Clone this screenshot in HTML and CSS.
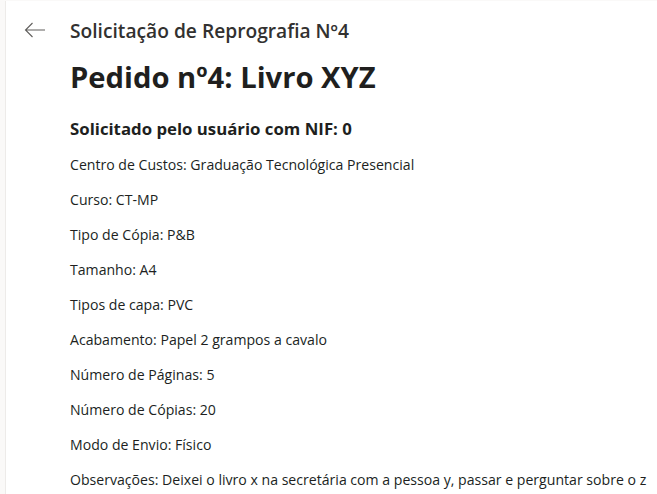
FILE: index.html
```html
<!DOCTYPE html>
<html lang="pt">
<head>
<meta charset="utf-8">
<link rel="stylesheet" href="styles.css">
</head>
<body>
<div class="panel">
  <header class="head">
    <button class="back" aria-label="Voltar">
      <svg width="22" height="16" viewBox="0 0 22 16"><path d="M21 8H1.5M8.5 1L1.5 8l7 7" fill="none" stroke="#605e5c" stroke-width="1.1"/></svg>
    </button>
    <h1 class="head-title">Solicitação de Reprografia Nº4</h1>
  </header>
  <main class="content">
    <h2 class="title">Pedido nº4: Livro XYZ</h2>
    <h3 class="sub">Solicitado pelo usuário com NIF: 0</h3>
    <p class="row">Centro de Custos: Graduação Tecnológica Presencial</p>
    <p class="row">Curso: CT-MP</p>
    <p class="row">Tipo de Cópia: P&amp;B</p>
    <p class="row">Tamanho: A4</p>
    <p class="row">Tipos de capa: PVC</p>
    <p class="row">Acabamento: Papel 2 grampos a cavalo</p>
    <p class="row">Número de Páginas: 5</p>
    <p class="row">Número de Cópias: 20</p>
    <p class="row">Modo de Envio: Físico</p>
    <p class="row nowrap">Observações: Deixei o livro x na secretária com a pessoa y, passar e perguntar sobre o z</p>
  </main>
</div>
</body>
</html>
```

FILE: styles.css
```css
html, body {
  margin: 0;
  padding: 0;
  height: 100%;
  overflow: hidden;
  background: #faf9f8;
  font-family: "Open Sans", "Noto Sans", sans-serif;
  color: #201f1e;
}
.panel {
  margin: 1px 0 0 5px;
  min-height: 100%;
  background: #fff;
  border-left: 1px solid #edebe9;
}
.head {
  display: flex;
  align-items: center;
  height: 58px;
  padding-left: 18px;
}
.back {
  border: 0;
  background: none;
  padding: 0;
  width: 46px;
  height: 32px;
  display: flex;
  align-items: center;
  cursor: pointer;
}
.head-title {
  margin: 0;
  font-size: 19.2px;
  font-weight: 600;
  color: #323130;
}
.content {
  padding-left: 64px;
}
.title {
  margin: -2px 0 0;
  font-size: 29.2px;
  font-weight: 700;
  line-height: 40px;
}
.sub {
  margin: 21px 0 0;
  font-size: 16.8px;
  font-weight: 700;
  line-height: 22px;
}
.row {
  margin: 13px 0 0;
  font-size: 14.1px;
  line-height: 22px;
}
.sub + .row {
  margin-top: 14px;
}
.nowrap {
  white-space: nowrap;
}
```
